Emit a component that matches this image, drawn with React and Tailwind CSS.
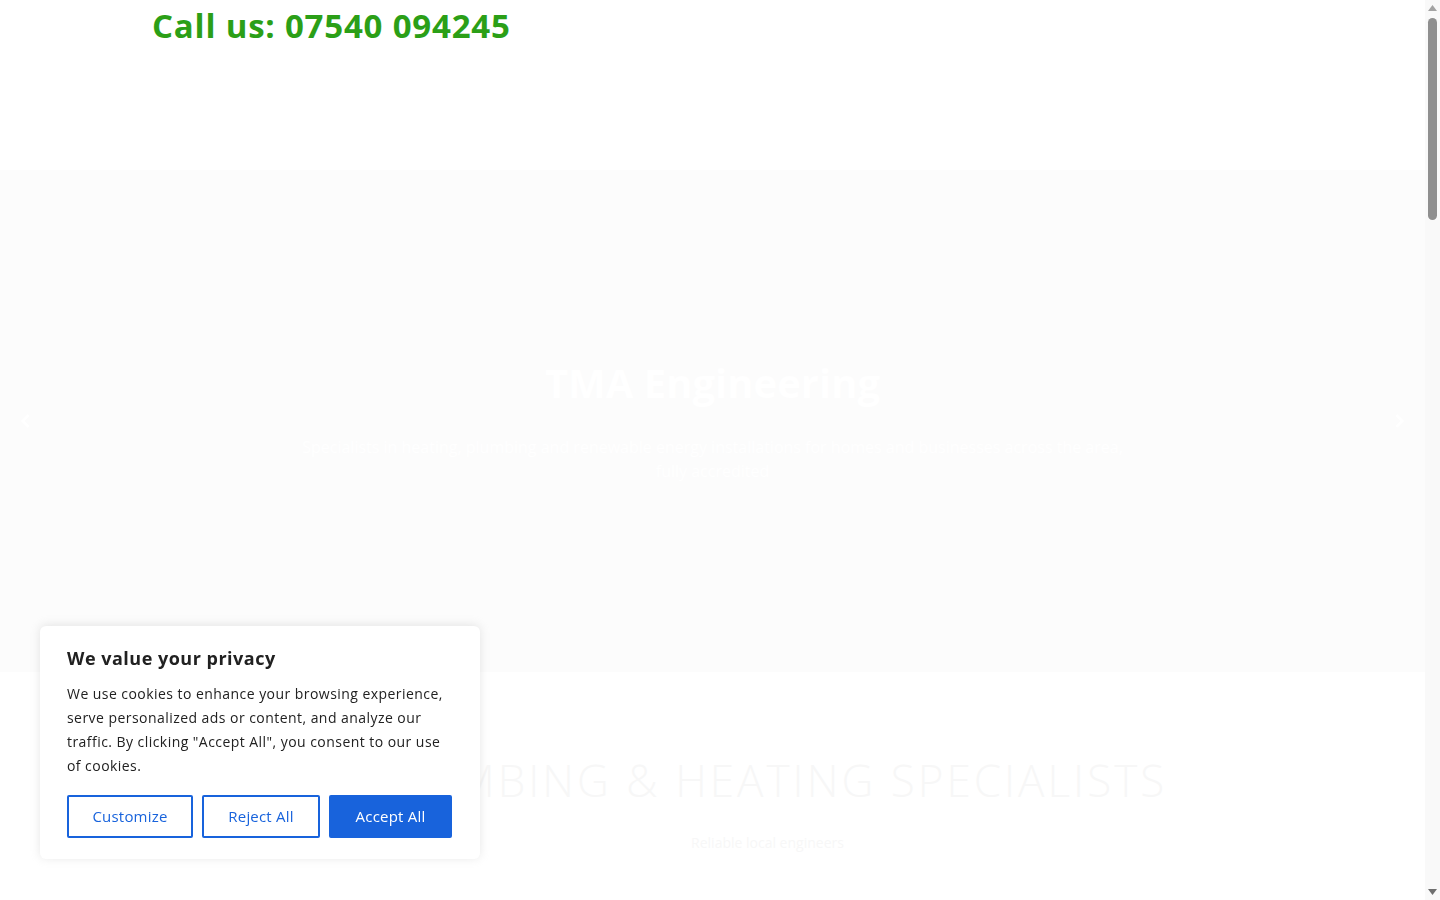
import React from "react";

const font = { fontFamily: '"Open Sans", "Liberation Sans", sans-serif' };

const CookieBanner = () => (
  <div className="fixed left-10 bottom-[41px] z-50 w-[440px] rounded-md bg-white px-[27px] pt-5 pb-[21px] shadow-[0_-1px_10px_0_rgba(172,171,171,0.3)]">
    <p className="text-[18px] leading-6 font-bold tracking-[0.5px] text-[#212121]">We value your privacy</p>
    <p className="mt-3 text-[14px] leading-6 tracking-[0.45px] text-[#212121]">
      We use cookies to enhance your browsing experience, serve personalized ads or content, and analyze our traffic. By clicking "Accept All", you consent to our use of cookies.
    </p>
    <div className="mt-[17px] flex gap-[9px]">
      <button className="h-[43px] w-[126px] rounded-[2px] border-2 border-[#1863dc] bg-transparent text-[15px] font-medium tracking-[0.2px] text-[#1863dc]">
        Customize
      </button>
      <button className="h-[43px] w-[118px] rounded-[2px] border-2 border-[#1863dc] bg-transparent text-[15px] font-medium tracking-[0.2px] text-[#1863dc]">
        Reject All
      </button>
      <button className="h-[43px] w-[123px] rounded-[2px] border-2 border-[#1863dc] bg-[#1863dc] text-[15px] font-medium tracking-[0.2px] text-white">
        Accept All
      </button>
    </div>
  </div>
);

const SlideArrow = ({ dir }) => (
  <svg className="h-5 w-5 text-white" viewBox="0 0 24 24" fill="none" stroke="currentColor" strokeWidth={3}>
    <path d={dir === "left" ? "M15 19l-7-7 7-7" : "M9 5l7 7-7 7"} />
  </svg>
);

// Plain grey scroll rail on the right edge of the window
const ScrollRail = () => (
  <div className="sticky top-0 flex h-screen w-[15px] shrink-0 flex-col items-center bg-[#f9f9f9]">
    <svg className="mt-[5px] h-[6px] w-[9px]" viewBox="0 0 9 6">
      <path d="M4.5 0L9 6H0z" fill="#a3a3a3" />
    </svg>
    <div className="mt-[7px] h-[202px] w-[9px] rounded-full bg-[#8f8f8f]" />
    <div className="flex-1" />
    <svg className="mb-[5px] h-[6px] w-[9px]" viewBox="0 0 9 6">
      <path d="M0 0h9L4.5 6z" fill="#6f6f6f" />
    </svg>
  </div>
);

export default function App() {
  return (
    <div className="flex bg-white" style={font}>
      <main className="min-w-0 flex-1">
        {/* Top bar */}
        <header className="h-[170px] bg-white">
          <div className="pl-[152px] pt-[5px]">
            <a className="text-[33px] leading-[42px] font-bold tracking-[0.8px] text-[#2b9f17]">Call us: 07540 094245</a>
          </div>
        </header>

        {/* Hero slider */}
        <section className="flex h-[502px] items-center justify-between bg-[#fcfcfc] px-4">
          <SlideArrow dir="left" />
          <div className="flex flex-col items-center text-center">
            <h1 className="text-[40px] leading-[48px] font-bold text-white">TMA Engineering</h1>
            <p className="mt-[28px] max-w-[830px] text-[16px] leading-6 text-white">
              Specialists in heating, plumbing and renewable energy installations for homes and businesses across the area, fully accredited
            </p>
          </div>
          <SlideArrow dir="right" />
        </section>

        {/* Services intro */}
        <section className="flex flex-col items-center bg-white pt-[84px] pb-24 pl-[110px]">
          <h2 className="text-[44px] leading-[48px] font-light uppercase tracking-[3px] text-[#f7f7f7]">Plumbing &amp; Heating Specialists</h2>
          <p className="mt-[28px] text-[14px] text-[#f7f7f7]">Reliable local engineers</p>
        </section>

        <section className="h-[2400px] bg-white" />
      </main>

      <ScrollRail />
      <CookieBanner />
    </div>
  );
}
